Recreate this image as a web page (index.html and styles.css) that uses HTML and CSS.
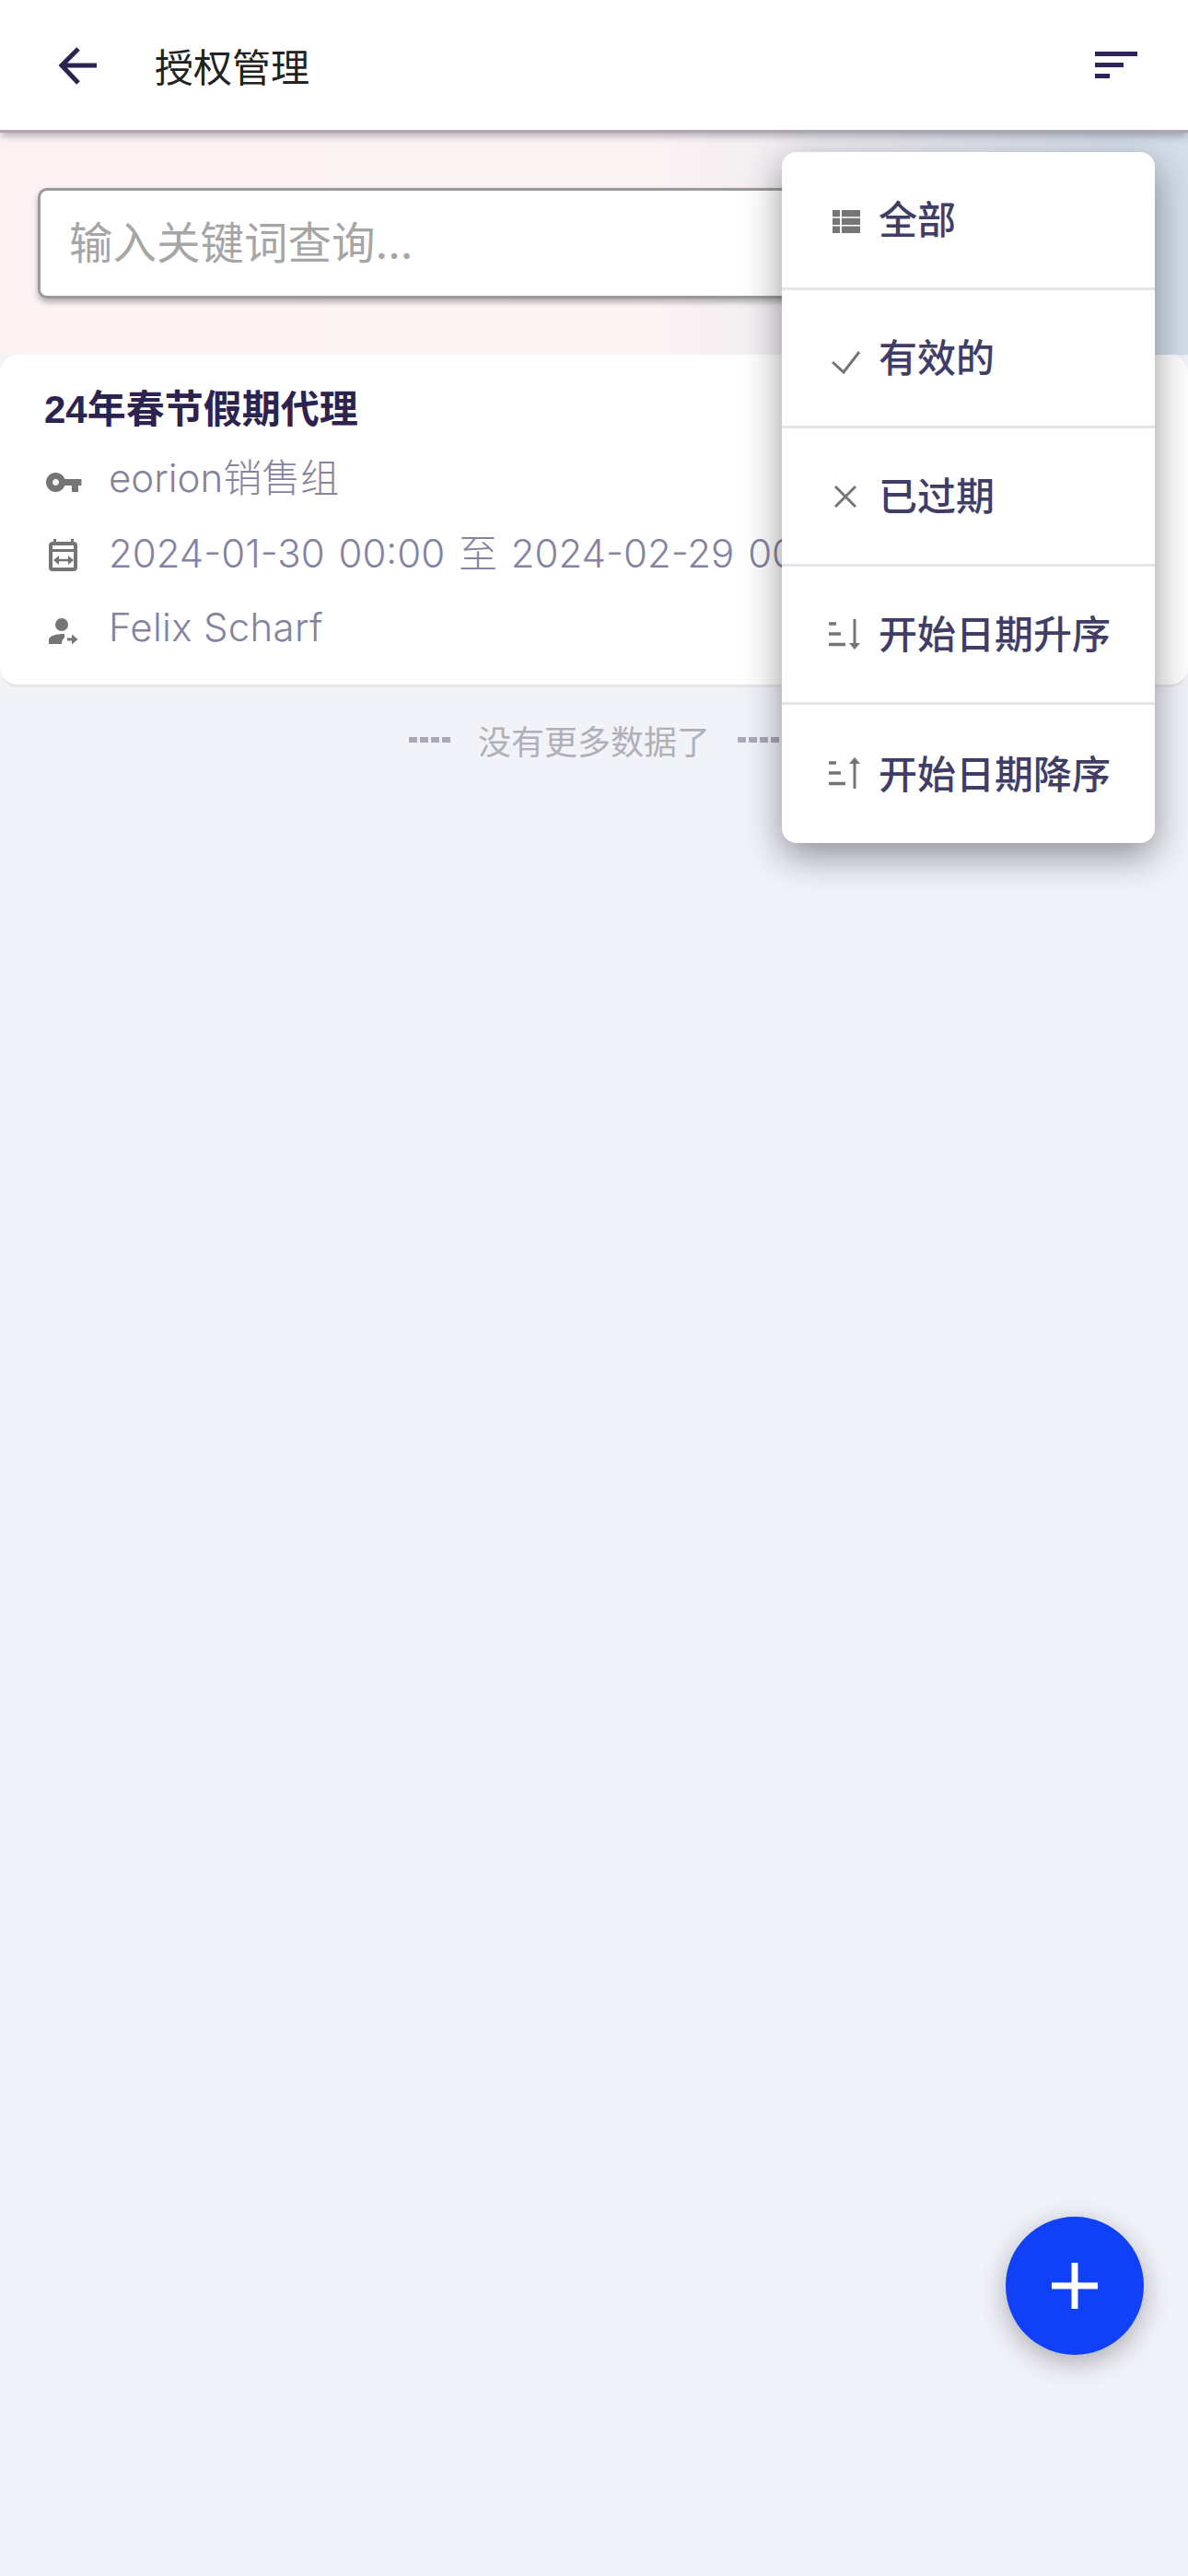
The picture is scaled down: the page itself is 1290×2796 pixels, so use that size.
FILE: index.html
```html
<!DOCTYPE html>
<html lang="zh-CN">
<head>
  <meta charset="UTF-8">
  <meta name="viewport" content="width=device-width, initial-scale=1.0">
  <title>授权管理</title>
  <link rel="stylesheet" href="styles.css">
</head>
<body>
  <div class="container">
    <header class="header">
      <svg class="back-icon" viewBox="0 0 48 48">
        <path d="M45 24H8M25 6L7 24l18 19" fill="none" stroke="#2d2350" stroke-width="5"/>
      </svg>
      <h1 class="header-title">授权管理</h1>
      <div class="filter-icon">
        <span class="filter-bar filter-bar--long"></span>
        <span class="filter-bar filter-bar--mid"></span>
        <span class="filter-bar filter-bar--short"></span>
      </div>
    </header>

    <div class="search-panel">
      <div class="search-box">
        <span class="search-placeholder">输入关键词查询...</span>
      </div>
    </div>

    <div class="delegate-card">
      <h2 class="delegate-title">24年春节假期代理</h2>
      <div class="delegate-row">
        <svg class="row-icon" viewBox="0 0 42 42">
          <path transform="translate(0.25 5.5) scale(1.75)" d="M12.65 10C11.83 7.67 9.61 6 7 6c-3.31 0-6 2.69-6 6s2.69 6 6 6c2.61 0 4.83-1.67 5.65-4H17v4h4v-4h2v-4H12.65zM7 14c-1.1 0-2-.9-2-2s.9-2 2-2 2 .9 2 2-.9 2-2 2z" fill="#757575"/>
        </svg>
        <span class="row-text">eorion销售组</span>
      </div>
      <div class="delegate-row">
        <svg class="row-icon" viewBox="0 0 42 42">
          <rect x="7" y="11" width="27" height="28" rx="2" fill="none" stroke="#757575" stroke-width="4"/>
          <path d="M7 18.5h27M11.500 6v5M30.500 6v5" fill="none" stroke="#757575" stroke-width="3"/>
          <path d="M14 29h14" stroke="#757575" stroke-width="2.500"/>
          <path d="M10 29l6-5v10zM32 29l-6-5v10z" fill="#757575"/>
        </svg>
        <span class="row-text row-text--date">2024-01-30 00:00 至 2024-02-29 00:00</span>
      </div>
      <div class="delegate-row">
        <svg class="row-icon" viewBox="0 0 42 42">
          <circle cx="19" cy="17" r="7" fill="#757575"/>
          <path d="M5 38v-5c1-4 8-6 17-6v4.500c-2 1-3 3-3 6.500z" fill="#757575"/>
          <path d="M25 33h7" stroke="#757575" stroke-width="3"/>
          <path d="M30 27.500l6.500 5.500-6.500 5.500z" fill="#757575"/>
        </svg>
        <span class="row-text row-text--name">Felix Scharf</span>
      </div>
    </div>

    <div class="no-more">
      <span class="no-more-dash"></span>
      <span>没有更多数据了</span>
      <span class="no-more-dash"></span>
    </div>

    <ul class="filter-menu">
      <li class="filter-item">
        <svg class="menu-icon" viewBox="0 0 42 42">
          <path d="M7 10h8v7.300H7zM7 18.800h8V26H7zM7 27.500h8V35H7zM17 10h20v7.300H17zM17 18.800h20V26H17zM17 27.500h20V35H17z" fill="#757575"/>
        </svg>
        <span class="menu-text">全部</span>
      </li>
      <li class="filter-item">
        <svg class="menu-icon" viewBox="0 0 42 42">
          <path d="M7 25l12 11L36 14" fill="none" stroke="#757575" stroke-width="3"/>
        </svg>
        <span class="menu-text">有效的</span>
      </li>
      <li class="filter-item">
        <svg class="menu-icon" viewBox="0 0 42 42">
          <path d="M10 10l22 22M32 10L10 32" fill="none" stroke="#757575" stroke-width="3"/>
        </svg>
        <span class="menu-text">已过期</span>
      </li>
      <li class="filter-item">
        <svg class="menu-icon" viewBox="0 0 42 42">
          <path d="M3 9h8M3 20h13M3 31.500h18" fill="none" stroke="#757575" stroke-width="3.500"/>
          <path d="M31 4v28" stroke="#757575" stroke-width="3"/>
          <path d="M25 30h12l-6 7z" fill="#757575"/>
        </svg>
        <span class="menu-text">开始日期升序</span>
      </li>
      <li class="filter-item">
        <svg class="menu-icon" viewBox="0 0 42 42">
          <path d="M3 9h8M3 20h13M3 31.500h18" fill="none" stroke="#757575" stroke-width="3.500"/>
          <path d="M31 8v29" stroke="#757575" stroke-width="3"/>
          <path d="M25 10h12l-6-7z" fill="#757575"/>
        </svg>
        <span class="menu-text">开始日期降序</span>
      </li>
    </ul>

    <button class="add-button">
      <svg class="add-icon" viewBox="0 0 50 50">
        <path d="M25 0v50M0 25h50" stroke="#fff" stroke-width="7"/>
      </svg>
    </button>
  </div>
</body>
</html>
```

FILE: styles.css
```css
body {
  margin: 0;
  font-family: Inter, "Noto Sans CJK SC", sans-serif;
  background: #f2f3f9;
}
.container {
  position: relative;
  display: flex;
  flex-direction: column;
  height: 2796px;
  overflow: hidden;
}
.header {
  position: relative;
  z-index: 2;
  display: flex;
  align-items: center;
  height: 141px;
  padding: 0 55px 0 60px;
  background: #fff;
  box-shadow: 0 3px 0 #aea6b6, 0 7px 9px -1px rgba(50, 45, 70, 0.4);
}
.back-icon {
  width: 48px;
  height: 48px;
  margin-right: 60px;
}
.header-title {
  flex: 1;
  margin: 0;
  font-size: 42px;
  font-weight: 400;
  color: #222;
}
.filter-icon {
  display: flex;
  flex-direction: column;
  gap: 7px;
  width: 46px;
}
.filter-bar {
  height: 5px;
  background: #30245a;
}
.filter-bar--mid {
  width: 31px;
}
.filter-bar--short {
  width: 16px;
}
.search-panel {
  height: 244px;
  box-sizing: border-box;
  padding: 63px 40px 0 41px;
  background: linear-gradient(90deg, #fef3f4 0%, #fcf3f4 55%, #d2deea 100%);
}
.search-box {
  display: flex;
  align-items: center;
  box-sizing: border-box;
  height: 120px;
  padding-left: 31px;
  background: #fff;
  border: 3px solid #9a9a9a;
  border-radius: 10px;
  box-shadow: 0 4px 6px rgba(0, 0, 0, 0.3);
}
.search-placeholder {
  padding-bottom: 7px;
  font-size: 47.5px;
  color: #a6a6a6;
}
.delegate-card {
  box-sizing: border-box;
  height: 361px;
  padding: 31px 0 0 48px;
  background: #fff;
  border-bottom: 3px solid #e6e6ea;
  border-radius: 20px;
}
.delegate-title {
  margin: 0 0 3px;
  font-family: "Liberation Sans", "Noto Sans CJK SC", sans-serif;
  font-size: 42px;
  line-height: 58px;
  font-weight: 700;
  color: #2d2350;
}
.delegate-row {
  display: flex;
  align-items: center;
  gap: 30px;
  height: 82px;
  font-size: 42px;
  font-weight: 300;
  color: #85839f;
  white-space: nowrap;
}
.row-text {
  margin-left: -2px;
  padding-bottom: 5px;
}
.row-text--date {
  word-spacing: 3px;
}
.row-text--name {
  padding-bottom: 3px;
  letter-spacing: 0.3px;
}
.row-icon {
  flex: none;
  width: 42px;
  height: 42px;
}
.no-more {
  display: flex;
  align-items: center;
  justify-content: center;
  gap: 30px;
  height: 114px;
  font-size: 36px;
  color: #b0b0b8;
}
.no-more-dash {
  width: 45px;
  height: 6px;
  background: repeating-linear-gradient(90deg, #aaa8b8 0, #aaa8b8 9px, transparent 9px, transparent 12px);
}
.filter-menu {
  position: absolute;
  top: 165px;
  left: 849px;
  z-index: 3;
  width: 405px;
  margin: 0;
  padding: 0;
  list-style: none;
  background: #fff;
  border-radius: 16px;
  box-shadow: 0 14px 40px rgba(20, 20, 30, 0.45);
}
.filter-item {
  display: flex;
  align-items: center;
  gap: 15px;
  box-sizing: border-box;
  height: 150px;
  padding-left: 48px;
  font-size: 42px;
  font-weight: 500;
  color: #403e66;
  border-bottom: 3px solid #e5e5e8;
}
.filter-item:last-child {
  border-bottom: none;
}
.menu-text {
  padding-bottom: 6px;
}
.menu-icon {
  flex: none;
  width: 42px;
  height: 42px;
}
.add-button {
  position: absolute;
  top: 2406px;
  left: 1092px;
  z-index: 3;
  display: flex;
  align-items: center;
  justify-content: center;
  width: 150px;
  height: 150px;
  padding: 0;
  border: none;
  border-radius: 50%;
  background: #1040f8;
  box-shadow: 0 8px 30px rgba(0, 0, 0, 0.3);
}
.add-icon {
  width: 50px;
  height: 50px;
}
```
